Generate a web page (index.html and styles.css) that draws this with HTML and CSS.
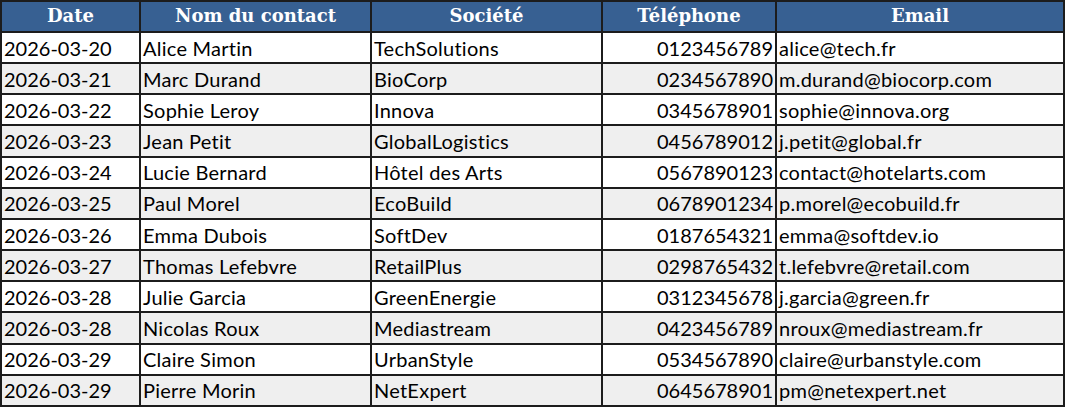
FILE: index.html
```html
<!DOCTYPE html>
<html lang="fr">
<head>
<meta charset="utf-8">
<link rel="stylesheet" href="styles.css">
</head>
<body>
<table class="sheet">
  <colgroup>
    <col class="c-date"><col class="c-name"><col class="c-soc"><col class="c-tel"><col class="c-mail">
  </colgroup>
  <thead>
    <tr><th>Date</th><th>Nom du contact</th><th>Société</th><th>Téléphone</th><th>Email</th></tr>
  </thead>
  <tbody>
    <tr><td>2026-03-20</td><td class="txt">Alice Martin</td><td class="txt">TechSolutions</td><td class="num">0123456789</td><td class="txt">alice@tech.fr</td></tr>
    <tr><td>2026-03-21</td><td class="txt">Marc Durand</td><td class="txt">BioCorp</td><td class="num">0234567890</td><td class="txt">m.durand@biocorp.com</td></tr>
    <tr><td>2026-03-22</td><td class="txt">Sophie Leroy</td><td class="txt">Innova</td><td class="num">0345678901</td><td class="txt">sophie@innova.org</td></tr>
    <tr><td>2026-03-23</td><td class="txt">Jean Petit</td><td class="txt">GlobalLogistics</td><td class="num">0456789012</td><td class="txt">j.petit@global.fr</td></tr>
    <tr><td>2026-03-24</td><td class="txt">Lucie Bernard</td><td class="txt">Hôtel des Arts</td><td class="num">0567890123</td><td class="txt">contact@hotelarts.com</td></tr>
    <tr><td>2026-03-25</td><td class="txt">Paul Morel</td><td class="txt">EcoBuild</td><td class="num">0678901234</td><td class="txt">p.morel@ecobuild.fr</td></tr>
    <tr><td>2026-03-26</td><td class="txt">Emma Dubois</td><td class="txt">SoftDev</td><td class="num">0187654321</td><td class="txt">emma@softdev.io</td></tr>
    <tr><td>2026-03-27</td><td class="txt">Thomas Lefebvre</td><td class="txt">RetailPlus</td><td class="num">0298765432</td><td class="txt">t.lefebvre@retail.com</td></tr>
    <tr><td>2026-03-28</td><td class="txt">Julie Garcia</td><td class="txt">GreenEnergie</td><td class="num">0312345678</td><td class="txt">j.garcia@green.fr</td></tr>
    <tr><td>2026-03-28</td><td class="txt">Nicolas Roux</td><td class="txt">Mediastream</td><td class="num">0423456789</td><td class="txt">nroux@mediastream.fr</td></tr>
    <tr><td>2026-03-29</td><td class="txt">Claire Simon</td><td class="txt">UrbanStyle</td><td class="num">0534567890</td><td class="txt">claire@urbanstyle.com</td></tr>
    <tr><td>2026-03-29</td><td class="txt">Pierre Morin</td><td class="txt">NetExpert</td><td class="num">0645678901</td><td class="txt">pm@netexpert.net</td></tr>
  </tbody>
</table>
</body>
</html>
```

FILE: styles.css
```css
html, body {
  margin: 0;
  padding: 0;
  background: #ffffff;
}

.sheet {
  border-collapse: collapse;
  table-layout: fixed;
  width: 1065px;
  font-family: Lato, "Liberation Sans", sans-serif;
  font-size: 20px;
  color: #000;
}

.c-date { width: 139px; }
.c-name { width: 231px; }
.c-soc { width: 231px; }
.c-tel { width: 174px; }
.c-mail { width: 288px; }

.sheet th,
.sheet td {
  border: 2px solid #1c1c1c;
  padding: 0 2px;
  white-space: nowrap;
  overflow: hidden;
  line-height: 24px;
}

.sheet th {
  background: #376092;
  color: #ffffff;
  font-family: "DejaVu Serif", "Liberation Serif", serif;
  font-weight: bold;
  font-size: 18px;
  text-align: center;
  height: 28px;
  padding-top: 0;
  padding-bottom: 1px;
}

.sheet td {
  height: 29.17px;
  text-align: left;
}

.sheet td.txt {
  letter-spacing: 0.25px;
}

.sheet td.num {
  text-align: right;
}

.sheet tbody tr:nth-child(even) td {
  background: #efefef;
}
```
